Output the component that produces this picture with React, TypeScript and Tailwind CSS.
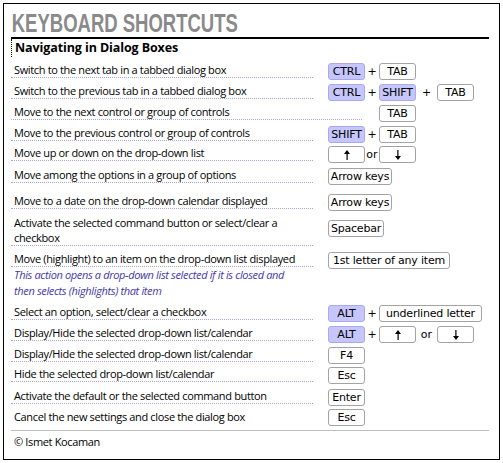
import clsx from "clsx";

type Part = { k?: string; t?: string; w: string; hl?: boolean; arrow?: "up" | "down" };

const Arrow = ({ dir }: { dir: "up" | "down" }) => (
  <svg width="6" height="10" viewBox="0 0 6 10" className={dir === "down" ? "rotate-180" : ""}>
    <path d="M3 0 L6 4 L0 4 Z" fill="#000" />
    <rect x="2.5" y="3" width="1.2" height="7" fill="#000" />
  </svg>
);

const Key = ({ p }: { p: Part }) => (
  <span
    className={clsx(
      "flex h-[17px] shrink-0 items-center justify-center whitespace-nowrap rounded-[3px] border font-['DejaVu_Sans',sans-serif] text-[11px] leading-none tracking-[-0.2px] text-black",
      p.w,
      p.hl ? "border-[#a9a9f2] bg-[#c6c6fc]" : "border-[#a3a3a3] bg-white"
    )}
  >
    {p.arrow ? <Arrow dir={p.arrow} /> : p.k}
  </span>
);

const Sep = ({ p }: { p: Part }) => (
  <span className={clsx("shrink-0 text-center font-['DejaVu_Sans',sans-serif] text-[11px] leading-none", p.w)}>
    {p.t}
  </span>
);

type Row = {
  text: string[];
  h: string;
  keys: Part[];
  line?: string;
  dotted?: boolean;
  mid?: boolean;
};

const CTRL: Part = { k: "CTRL", w: "w-[37px]", hl: true };
const SHIFT: Part = { k: "SHIFT", w: "w-[37px]", hl: true };
const ALT: Part = { k: "ALT", w: "w-[37px]", hl: true };
const TAB: Part = { k: "TAB", w: "w-[37px]" };
const PLUS: Part = { t: "+", w: "w-[14px]" };

const rows: Row[] = [
  { text: ["Switch to the next tab in a tabbed dialog box"], h: "h-[21px]", keys: [CTRL, PLUS, TAB] },
  {
    text: ["Switch to the previous tab in a tabbed dialog box"],
    h: "h-[21px]",
    keys: [CTRL, PLUS, SHIFT, { t: "+", w: "w-[21px]" }, TAB],
  },
  {
    text: ["Move to the next control or group of controls"],
    h: "h-[21px]",
    keys: [{ t: "", w: "w-[51px]" }, TAB],
    line: "w-[351px]",
  },
  { text: ["Move to the previous control or group of controls"], h: "h-[21px]", keys: [SHIFT, PLUS, TAB] },
  {
    text: ["Move up or down on the drop-down list"],
    h: "h-[20px]",
    keys: [{ w: "w-[37px]", arrow: "up" }, { t: "or", w: "w-[14px]" }, { w: "w-[37px]", arrow: "down" }],
  },
  { text: ["Move among the options in a group of options"], h: "h-[22px]", keys: [{ k: "Arrow keys", w: "w-[64px]" }] },
  { text: ["Move to a date on the drop-down calendar displayed"], h: "h-[26px]", keys: [{ k: "Arrow keys", w: "w-[64px]" }] },
  {
    text: ["Activate the selected command button or select/clear a", "checkbox"],
    h: "h-[37px]",
    keys: [{ k: "Spacebar", w: "w-[56px]" }],
    mid: true,
  },
  {
    text: ["Move (highlight) to an item on the drop-down list displayed"],
    h: "h-[21px]",
    keys: [{ k: "1st letter of any item", w: "w-[122px]" }],
  },
];

const rows2: Row[] = [
  {
    text: ["Select an option, select/clear a checkbox"],
    h: "h-[21px]",
    keys: [ALT, PLUS, { k: "underlined letter", w: "w-[103px]" }],
  },
  {
    text: ["Display/Hide the selected drop-down list/calendar"],
    h: "h-[21px]",
    keys: [ALT, PLUS, { w: "w-[37px]", arrow: "up" }, { t: "or", w: "w-[21px]" }, { w: "w-[37px]", arrow: "down" }],
  },
  { text: ["Display/Hide the selected drop-down list/calendar"], h: "h-[21px]", keys: [{ k: "F4", w: "w-[37px]" }] },
  { text: ["Hide the selected drop-down list/calendar"], h: "h-[20px]", keys: [{ k: "Esc", w: "w-[37px]" }] },
  { text: ["Activate the default or the selected command button"], h: "h-[22px]", keys: [{ k: "Enter", w: "w-[37px]" }] },
  { text: ["Cancel the new settings and close the dialog box"], h: "h-[20px]", keys: [{ k: "Esc", w: "w-[37px]" }], dotted: false },
];

function ShortcutRow({ r }: { r: Row }) {
  return (
    <div className={clsx("flex", r.mid ? "items-center" : "items-end", r.h)}>
      <div className="w-[317px] shrink-0 self-end">
        <div
          className={clsx(
            "whitespace-nowrap pl-[3px] text-[11px] tracking-[-0.35px] text-black",
            r.mid ? "leading-[15px]" : "leading-[14px]",
            r.line ?? "w-[302px]",
            r.dotted === false ? "" : "border-b border-dotted border-[#a7a7dc]"
          )}
        >
          {r.text.map((t) => (
            <div key={t}>{t}</div>
          ))}
        </div>
      </div>
      <div className={clsx("relative z-10 flex h-[17px] items-center", r.mid ? "mt-[1px]" : "mb-[-2px]")}>
        {r.keys.map((p, i) => (p.t !== undefined ? <Sep key={i} p={p} /> : <Key key={i} p={p} />))}
      </div>
    </div>
  );
}

export default function App() {
  return (
    <div className="bg-white p-[3px] font-['Open_Sans','Noto_Sans',sans-serif]">
      <div className="h-[457px] w-[497px] border border-black pl-[7px]">
        <div className="w-[478px]">
          <div className="flex h-[33px] items-end">
            <h1 className="origin-left scale-x-[0.74] whitespace-nowrap pl-[1px] font-['Liberation_Sans_Narrow','Liberation_Sans',sans-serif] text-[25px] font-bold leading-[28px] text-[#8a8a8a]">
              KEYBOARD SHORTCUTS
            </h1>
          </div>
          <div className="h-[2px] bg-black" />
          <div className="flex h-[18px] items-center border-l border-dotted border-black pl-[3px] text-[12.5px] font-bold leading-none tracking-[-0.1px] text-black">
            Navigating in Dialog Boxes
          </div>
          {rows.map((r, i) => (
            <ShortcutRow key={i} r={r} />
          ))}
          <div className="whitespace-nowrap pl-[3px] text-[11px] italic leading-[16px] tracking-[-0.35px] text-[#4238a8]">
            <div>This action opens a drop-down list selected if it is closed and</div>
            <div>then selects (highlights) that item</div>
          </div>
          {rows2.map((r, i) => (
            <ShortcutRow key={i} r={r} />
          ))}
          <div className="mt-[6px] border-t border-[#bdbdbd] pl-[3px] text-[11px] leading-[22px] tracking-[-0.35px] text-black">
            © Ismet Kocaman
          </div>
        </div>
      </div>
    </div>
  );
}
